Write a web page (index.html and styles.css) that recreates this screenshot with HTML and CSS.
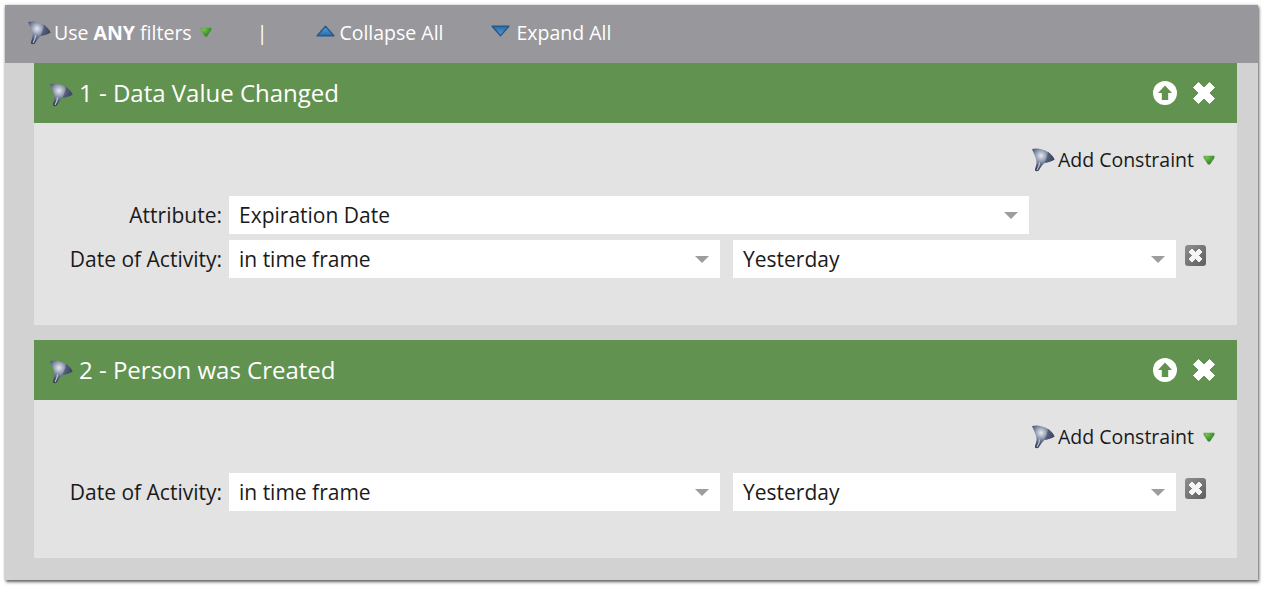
FILE: index.html
```html
<!DOCTYPE html>
<html lang="en">
<head>
<meta charset="utf-8">
<title>Smart List Filters</title>
<link rel="stylesheet" href="styles.css">
</head>
<body>
<svg class="defs" width="0" height="0" aria-hidden="true">
  <defs>
    <radialGradient id="fg" cx="0.4" cy="0.32" r="0.6">
      <stop offset="0" stop-color="#e6e9ef"/>
      <stop offset="0.3" stop-color="#a9b2c3"/>
      <stop offset="0.65" stop-color="#5f6a88"/>
      <stop offset="1" stop-color="#343e5a"/>
    </radialGradient>
    <radialGradient id="gd" cx="0.3" cy="0.2" r="0.9">
      <stop offset="0" stop-color="#7cc04e"/>
      <stop offset="0.6" stop-color="#459636"/>
      <stop offset="1" stop-color="#2f7a2c"/>
    </radialGradient>
    <linearGradient id="bu" x1="0" y1="0" x2="0" y2="1">
      <stop offset="0" stop-color="#5f9dd2"/>
      <stop offset="1" stop-color="#2c6da8"/>
    </linearGradient>
    <linearGradient id="bd" x1="0" y1="0" x2="0" y2="1">
      <stop offset="0" stop-color="#2a6aa6"/>
      <stop offset="1" stop-color="#5f9dd2"/>
    </linearGradient>
    <symbol id="funnel" viewBox="0 0 24 24">
      <path d="M1 1.5C6 0 12 1.5 17 4.5C20 6.5 23 10 23.5 12C21 14 16.5 15 13.5 15.5C11.5 17 9.5 20 7.5 23.3C6.5 24 4.5 24 4 23C3.8 21.5 5 19 5.5 16C6 12 3 6.5 1 1.5Z" fill="url(#fg)"/>
      <path d="M17 4.5C20 6.5 23 10 23.5 12C21 14 16.5 15 13.5 15.5C15 12 16.5 8 17 4.5Z" fill="#3f4966" opacity="0.6"/>
      <path d="M8.5 15C8.5 17.5 7.5 20 6 22.5" fill="none" stroke="#dfe3ea" stroke-width="1.2" opacity="0.8"/>
    </symbol>
    <symbol id="drop" viewBox="0 0 12 10">
      <path d="M0.6 0.8H11.4V3L7 9.4H5L0.6 3Z" fill="url(#gd)"/>
    </symbol>
    <symbol id="up" viewBox="0 0 18 11">
      <path d="M1 10L9 1L17 10Z" fill="url(#bu)" stroke="#1f5a92" stroke-width="1.2" stroke-linejoin="round"/>
    </symbol>
    <symbol id="down" viewBox="0 0 18 11">
      <path d="M1 1L9 10L17 1Z" fill="url(#bd)" stroke="#1f5a92" stroke-width="1.2" stroke-linejoin="round"/>
    </symbol>
    <symbol id="circle-up" viewBox="0 0 24 24">
      <circle cx="12" cy="12" r="12" fill="#fff"/>
      <path d="M12 4.5L19 12H15.2V19H8.8V12H5Z" fill="#62924f"/>
    </symbol>
    <symbol id="close" viewBox="0 0 24 24">
      <path d="M1.5 6.5L6.5 1.5L12 7L17.5 1.5L22.5 6.5L17 12L22.5 17.5L17.5 22.5L12 17L6.5 22.5L1.5 17.5L7 12Z" fill="#fff" stroke="#fff" stroke-linejoin="round"/>
    </symbol>
    <linearGradient id="rm" x1="0" y1="0" x2="1" y2="1">
      <stop offset="0" stop-color="#8f8f8f"/>
      <stop offset="1" stop-color="#5f5f5f"/>
    </linearGradient>
    <symbol id="remove" viewBox="0 0 21 21">
      <rect x="0" y="0" width="21" height="21" rx="3" fill="url(#rm)"/>
      <path d="M4 7L7 4L10.5 7.5L14 4L17 7L13.5 10.5L17 14L14 17L10.5 13.5L7 17L4 14L7.5 10.5Z" fill="#f6f6f6" stroke="#f6f6f6" stroke-linejoin="round"/>
    </symbol>
  </defs>
</svg>

<main class="panel">
  <div class="toolbar">
    <span class="tool tool-filter">
      <svg class="ic-funnel"><use href="#funnel"/></svg>
      <span>Use <b>ANY</b> filters</span>
      <svg class="ic-drop"><use href="#drop"/></svg>
    </span>
    <span class="sep">|</span>
    <span class="tool tool-collapse"><svg class="ic-tri"><use href="#up"/></svg>Collapse All</span>
    <span class="tool tool-expand"><svg class="ic-tri"><use href="#down"/></svg>Expand All</span>
  </div>

  <section class="card">
    <header class="card-head">
      <svg class="ic-funnel"><use href="#funnel"/></svg>
      <h2 class="card-title">1 - Data Value Changed</h2>
      <svg class="ic-head ic-up"><use href="#circle-up"/></svg>
      <svg class="ic-head"><use href="#close"/></svg>
    </header>
    <div class="card-body">
      <div class="add"><svg class="ic-funnel"><use href="#funnel"/></svg><span>Add Constraint</span><svg class="ic-drop"><use href="#drop"/></svg></div>
      <div class="row">
        <label class="label">Attribute:</label>
        <div class="select select-wide">Expiration Date<i class="caret"></i></div>
      </div>
      <div class="row">
        <label class="label">Date of Activity:</label>
        <div class="select select-a">in time frame<i class="caret"></i></div>
        <div class="select select-b">Yesterday<i class="caret"></i></div>
        <svg class="ic-remove"><use href="#remove"/></svg>
      </div>
    </div>
  </section>

  <section class="card">
    <header class="card-head">
      <svg class="ic-funnel"><use href="#funnel"/></svg>
      <h2 class="card-title">2 - Person was Created</h2>
      <svg class="ic-head ic-up"><use href="#circle-up"/></svg>
      <svg class="ic-head"><use href="#close"/></svg>
    </header>
    <div class="card-body">
      <div class="add"><svg class="ic-funnel"><use href="#funnel"/></svg><span>Add Constraint</span><svg class="ic-drop"><use href="#drop"/></svg></div>
      <div class="row">
        <label class="label">Date of Activity:</label>
        <div class="select select-a">in time frame<i class="caret"></i></div>
        <div class="select select-b">Yesterday<i class="caret"></i></div>
        <svg class="ic-remove"><use href="#remove"/></svg>
      </div>
    </div>
  </section>
</main>
</body>
</html>
```
FILE: styles.css
```css
* { box-sizing: border-box; }
html { margin: 0; padding: 0; background: #fff; height: 100%; }
body {
  margin: 0;
  height: 100%;
  overflow: hidden;
  font-family: "Open Sans", "Liberation Sans", sans-serif;
  font-size: 21px;
  color: #1a1a1a;
  padding: 5px 0 0 5px;
}
.defs { display: block; height: 0; }
.panel {
  width: 1253px;
  height: 575px;
  background: #d2d2d2;
  box-shadow: 1px 2px 3px rgba(0, 0, 0, .6), 0 0 3px rgba(0, 0, 0, .2);
  display: flex;
  flex-direction: column;
  align-items: flex-start;
}
.toolbar {
  width: 100%;
  height: 58px;
  flex: none;
  background: #98979c;
  color: #fff;
  font-size: 19.5px;
  display: flex;
  align-items: center;
  padding-left: 22px;
  padding-bottom: 4px;
}
.tool { display: flex; align-items: center; white-space: nowrap; }
.tool b { font-weight: 700; }
.ic-funnel { width: 24px; height: 25px; flex: none; }
.tool-filter .ic-funnel { margin-right: 3px; }
.ic-drop { width: 12px; height: 10px; flex: none; }
.tool-filter .ic-drop { margin-left: 8px; }
.sep { margin-left: 45px; }
.tool-collapse { margin-left: 49px; }
.tool-collapse .ic-tri { margin-right: 4px; }
.tool-expand { margin-left: 48px; }
.ic-tri { width: 19px; height: 12px; margin-right: 6px; margin-top: -2px; flex: none; }
.card { width: 1203px; flex: none; margin-left: 29px; }
.card + .card { margin-top: 15px; }
.card-head {
  height: 60px;
  background: #62924f;
  color: #fff;
  display: flex;
  align-items: center;
  padding: 0 21px 2px 15px;
}
.card-head .ic-funnel { margin-top: 4px; }
.card-title {
  margin: 0 0 0 6px;
  font-size: 24px;
  font-weight: 400;
  flex: 1;
  white-space: nowrap;
}
.ic-head { width: 24px; height: 24px; flex: none; margin-top: 2px; }
.ic-up { margin-right: 15px; }
.card-body {
  background: #e3e3e3;
  padding: 24px 0 47px;
}
.add {
  height: 27px;
  margin-bottom: 22px;
  display: flex;
  align-items: center;
  justify-content: flex-end;
  padding: 0 22px 2px 0;
  font-size: 19.5px;
  white-space: nowrap;
}
.add span { margin-left: 3px; }
.add .ic-drop { margin-left: 9px; }
.row {
  display: flex;
  align-items: center;
  height: 38px;
}
.row + .row { margin-top: 6px; }
.label { width: 188px; text-align: right; white-space: nowrap; flex: none; }
.select {
  position: relative;
  height: 38px;
  margin-left: 7px;
  background: #fff;
  line-height: 38px;
  padding-left: 10px;
  flex: none;
}
.select-wide { width: 800px; }
.select-a { width: 491px; }
.select-b { width: 443px; margin-left: 13px; }
.caret {
  position: absolute;
  right: 11px;
  top: 16px;
  width: 0;
  height: 0;
  border-left: 7px solid transparent;
  border-right: 7px solid transparent;
  border-top: 7px solid #9d9d9d;
}
.ic-remove { width: 21px; height: 21px; flex: none; margin: -8px 0 0 9px; }
```
